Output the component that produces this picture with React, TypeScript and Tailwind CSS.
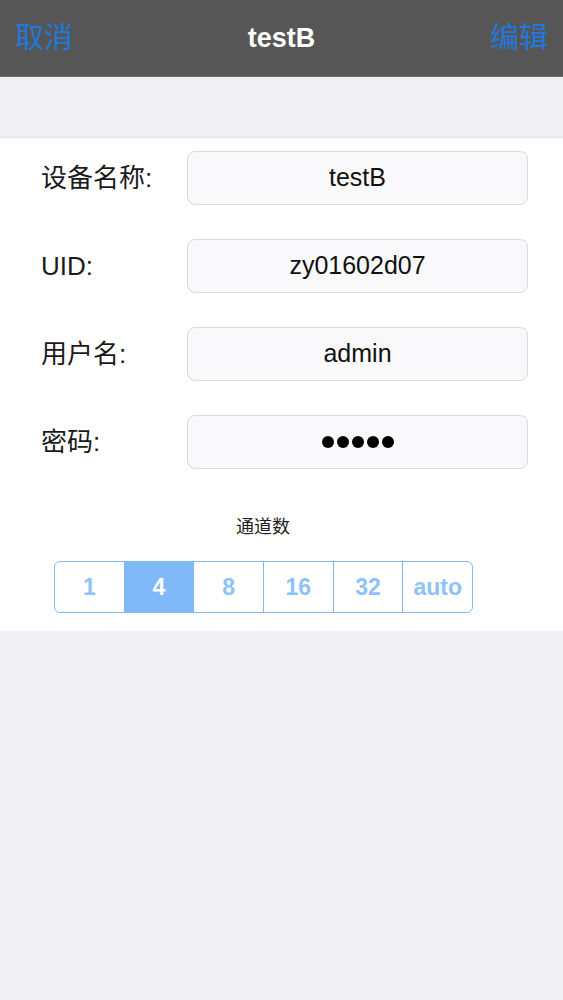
import React from "react";

const font = { fontFamily: '"Liberation Sans", "Noto Sans CJK SC", Arial, sans-serif' };

function Field({ label, children }: { label: string; children: React.ReactNode }) {
  return (
    <div className="flex items-center h-[54px]">
      <div className="w-[187px] shrink-0 pl-[41px] text-[26px] text-[#1a1a1a] whitespace-nowrap leading-none">{label}</div>
      <div className="shrink-0 w-[341px] h-[54px] rounded-[8px] border border-[#d9d8dc] bg-[#f9f8fa] flex items-center justify-center text-[25px] text-[#111]">
        {children}
      </div>
    </div>
  );
}

export default function App() {
  const segs = ["1", "4", "8", "16", "32", "auto"];
  return (
    <div className="w-[563px] h-[1000px] bg-[#efeff4] flex flex-col" style={font}>
      <div className="h-[77px] bg-[#575657] flex items-center justify-between px-[15px] border-b border-[#6a696b]">
        <span className="text-[29px] text-[#1f78dc] leading-none">取消</span>
        <span className="text-[27px] text-white leading-none font-bold">testB</span>
        <span className="text-[29px] text-[#1f78dc] leading-none">编辑</span>
      </div>
      <div className="h-[61px] border-b border-[#e4e3e8]" />
      <div className="bg-white flex flex-col pt-[13px] pb-[18px] gap-[34px]">
        <Field label="设备名称:">testB</Field>
        <Field label="UID:">zy01602d07</Field>
        <Field label="用户名:">admin</Field>
        <Field label="密码:">
          <div className="flex gap-[3px]">
            {[0, 1, 2, 3, 4].map((i) => (
              <div key={i} className="w-[12px] h-[12px] rounded-full bg-black" />
            ))}
          </div>
        </Field>
        <div className="flex flex-col items-start pl-[54px] mt-[15px]">
          <div className="w-[418px] text-center text-[18px] text-[#222] leading-none mb-[25px]">通道数</div>
          <div className="flex w-[419px] h-[52px] border border-[#80b9f8] rounded-[6px] overflow-hidden">
            {segs.map((s, i) => (
              <div
                key={s}
                className={
                  "flex-1 flex items-center justify-center text-[23px] font-bold " +
                  (i > 0 ? "border-l border-[#80b9f8] " : "") +
                  (i === 1 ? "bg-[#80b9f8] text-white" : "text-[#8fc2f7]")
                }
              >
                {s}
              </div>
            ))}
          </div>
        </div>
      </div>
    </div>
  );
}
